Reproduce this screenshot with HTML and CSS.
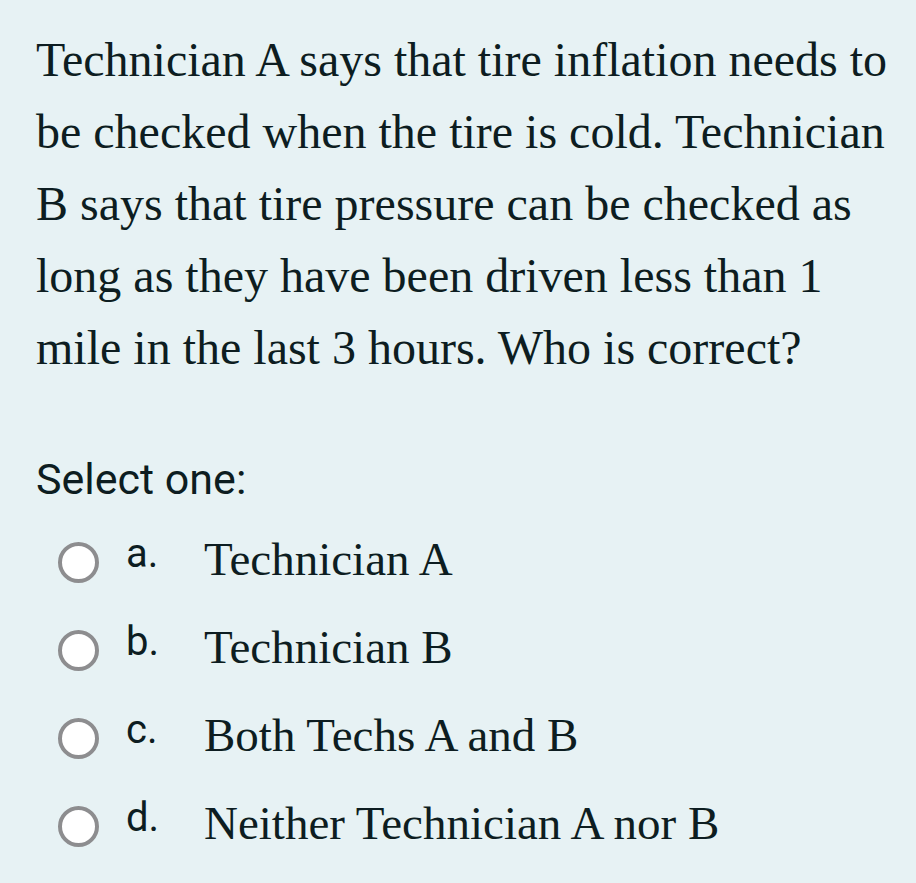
FILE: index.html
```html
<!DOCTYPE html>
<html lang="en">
<head>
<meta charset="utf-8">
<title>Question</title>
<link rel="stylesheet" href="styles.css">
</head>
<body>
<div class="card">
  <p class="question">Technician A says that tire inflation needs to be checked when the tire is cold. Technician B says that tire pressure can be checked as long as they have been driven less than 1 mile in the last 3 hours. Who is correct?</p>
  <p class="prompt">Select one:</p>
  <div class="options">
    <label class="option"><span class="radio"></span><span class="label"><span class="letter">a.</span><span class="text">Technician A</span></span></label>
    <label class="option"><span class="radio"></span><span class="label"><span class="letter">b.</span><span class="text">Technician B</span></span></label>
    <label class="option"><span class="radio"></span><span class="label"><span class="letter">c.</span><span class="text">Both Techs A and B</span></span></label>
    <label class="option"><span class="radio"></span><span class="label"><span class="letter">d.</span><span class="text">Neither Technician A nor B</span></span></label>
  </div>
</div>
</body>
</html>
```

FILE: styles.css
```css
html, body {
  margin: 0;
  padding: 0;
  background: #e7f2f4;
}
.card {
  padding: 24px 12px 0 36px;
  color: #0d1d21;
}
.question {
  margin: 0;
  font-family: "Liberation Serif", "Times New Roman", serif;
  font-size: 48px;
  line-height: 72px;
  width: 868px;
}
.prompt {
  margin: 71px 0 0 0;
  font-family: Roboto, "Liberation Sans", sans-serif;
  font-size: 43px;
  line-height: 48px;
}
.options {
  margin-top: 15px;
  display: flex;
  flex-direction: column;
}
.option {
  display: flex;
  align-items: center;
  height: 88px;
  padding-left: 22px;
}
.radio {
  box-sizing: border-box;
  width: 41px;
  height: 41px;
  border: 4px solid #8d8d8f;
  border-radius: 50%;
  background: #ffffff;
  flex: none;
}
.label {
  margin-left: 27px;
  line-height: 56px;
  white-space: nowrap;
}
.letter {
  display: inline-block;
  width: 78px;
  font-family: Roboto, "Liberation Sans", sans-serif;
  font-size: 40px;
  vertical-align: 8px;
}
.text {
  font-family: "Liberation Serif", "Times New Roman", serif;
  font-size: 47px;
}
```
